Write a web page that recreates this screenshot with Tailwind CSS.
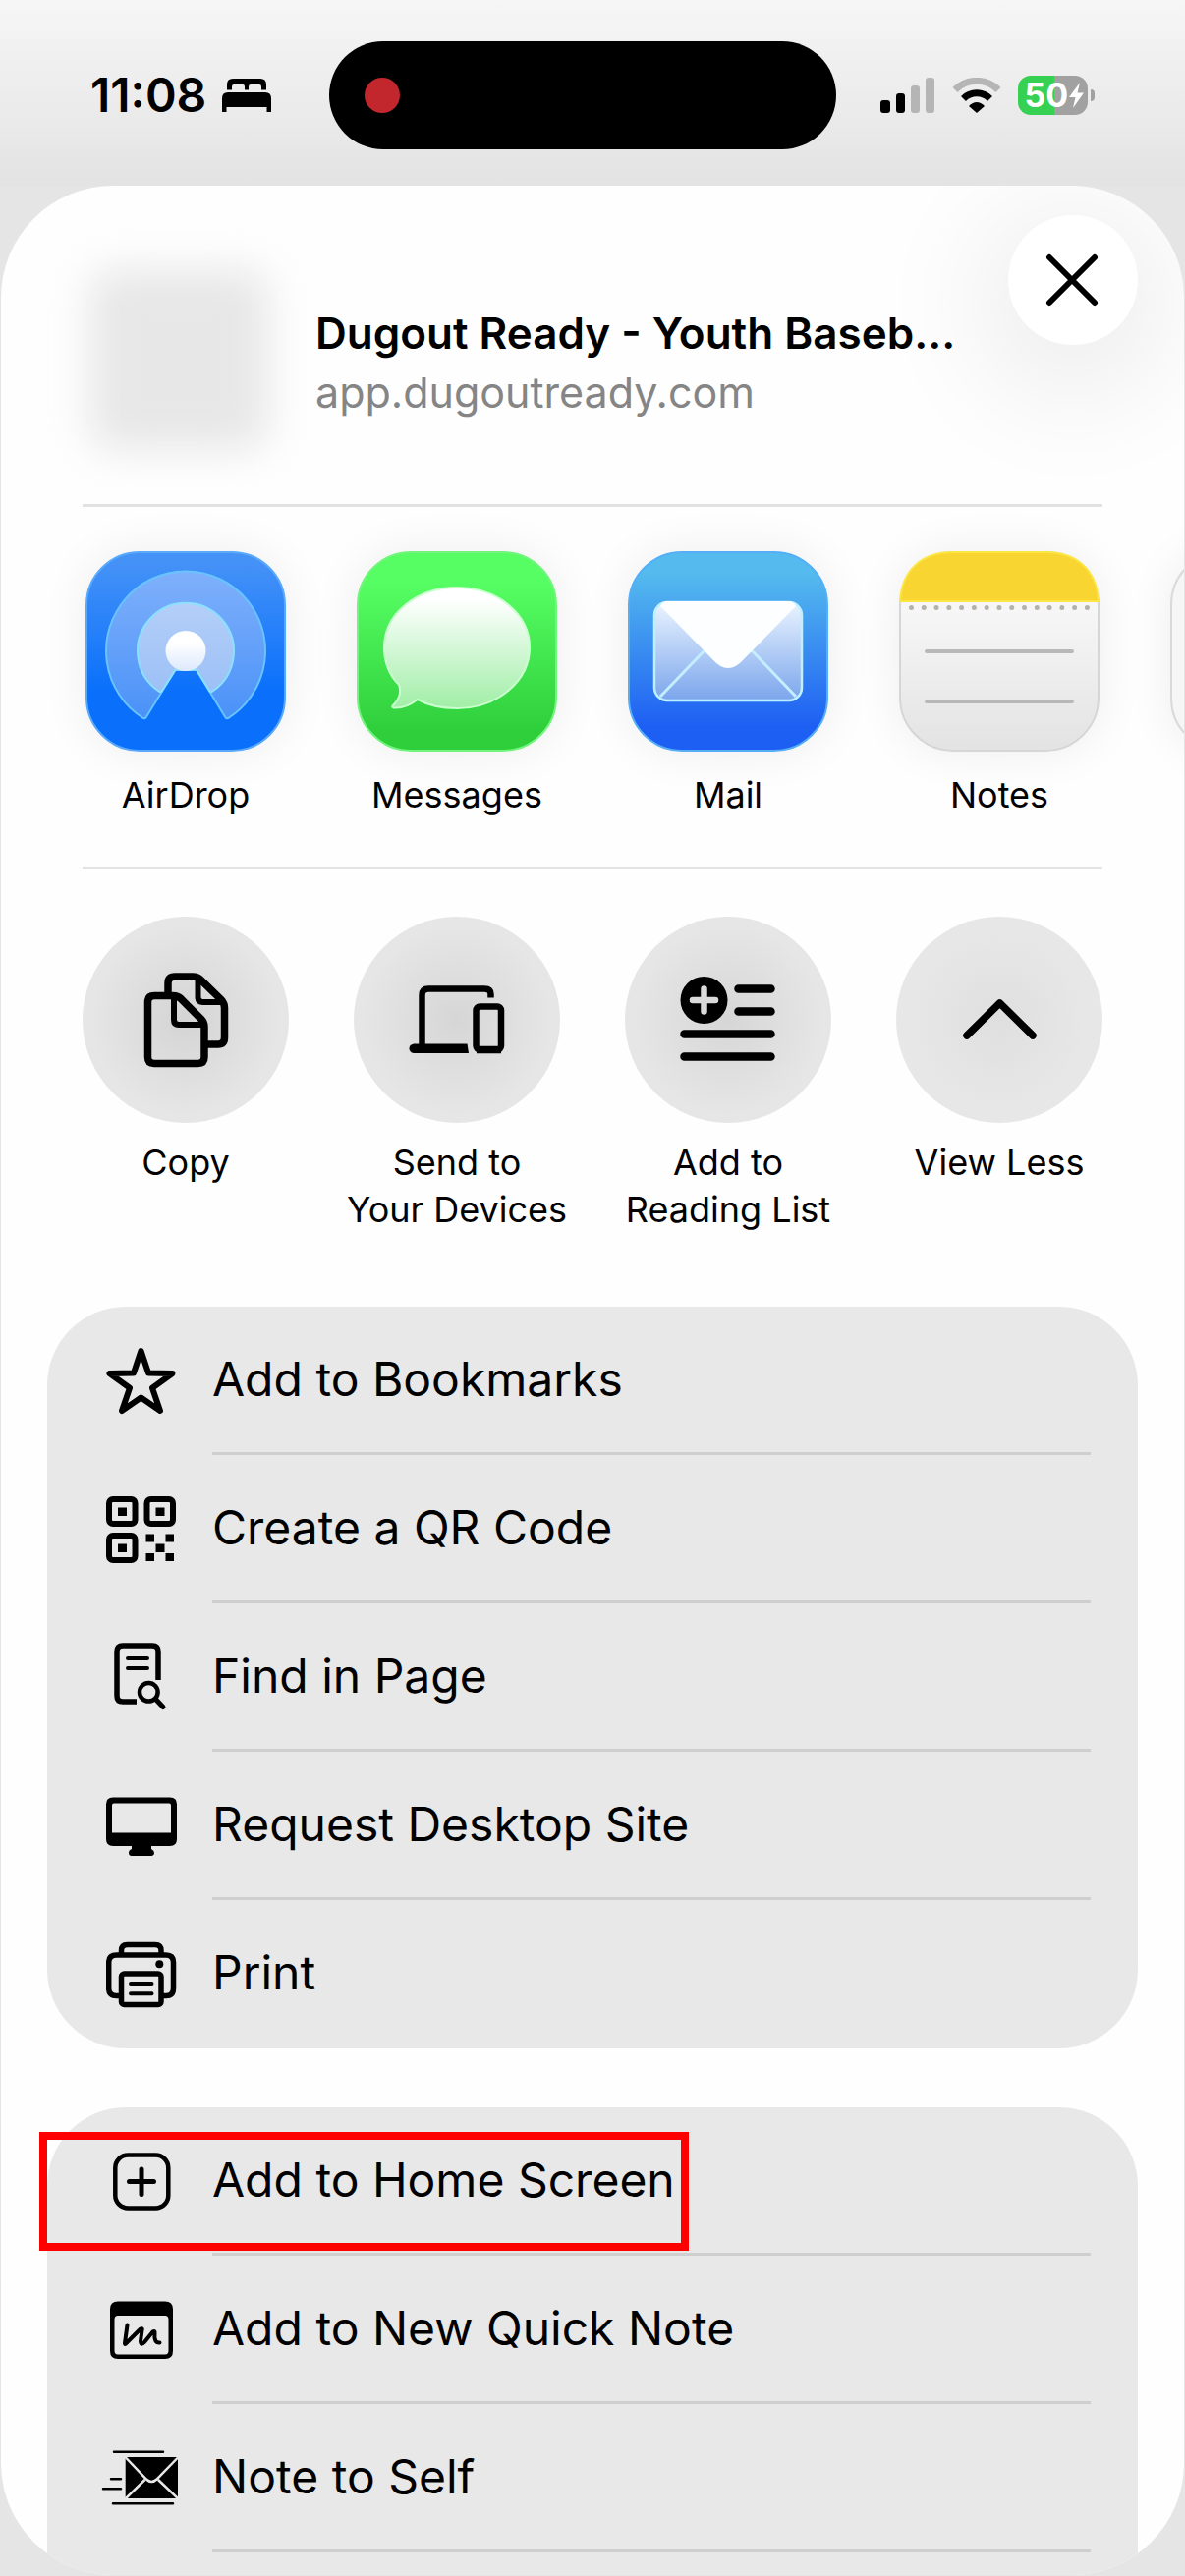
<!DOCTYPE html>
<html lang="en">
<head>
<meta charset="utf-8">
<meta name="viewport" content="width=device-width, initial-scale=1">
<title>Share</title>
<script src="https://cdn.jsdelivr.net/npm/@tailwindcss/browser@4"></script>
</head>
<body class="flex min-h-screen flex-col overflow-x-hidden bg-[#e5e5e5] pb-px font-['Inter','Liberation_Sans',sans-serif] text-black">

<!-- Status bar -->
<header class="flex h-[189px] items-start bg-linear-to-b from-[#f6f6f6] to-[#e3e3e3] pt-[42px]">
  <div class="flex h-[110px] w-[27.8%] shrink-0 items-center gap-4 pl-[92px]">
    <time class="text-[48px] leading-none font-semibold">11:08</time>
    <svg class="h-[34px] w-[50px] shrink-0" viewBox="0 0 50 34" role="img" aria-label="Sleep focus">
      <path d="M5 11.500V6Q5 0 11 0H39Q45 0 45 6V11.500H40V8Q40 6 38 6H29Q27 6 27 8V11.500H23V8Q23 6 21 6H12Q10 6 10 8V11.500Z"/>
      <path d="M0 34V20Q0 14 6 14H44Q50 14 50 20V34H45.500V29H4.500V34Z"/>
    </svg>
  </div>
  <div class="flex h-[110px] w-[42.8%] shrink-0 items-center rounded-full bg-black pl-9"><span class="size-9 rounded-full bg-[#c1272d]"></span></div>
  <div class="flex h-[110px] min-w-0 flex-1 items-center gap-[17px] pl-[45px]">
    <svg class="h-[36px] w-[56px] shrink-0" viewBox="0 0 56 36" role="img" aria-label="Signal">
      <rect x="0" y="23" width="10" height="13" rx="3"/><rect x="16" y="16" width="9" height="20" rx="3"/>
      <g fill="#b5b5b5"><rect x="31" y="8" width="9" height="28" rx="3"/><rect x="46" y="0" width="9" height="36" rx="3"/></g>
    </svg>
    <svg class="h-[36px] w-[50px] shrink-0" viewBox="0 0 50 36" role="img" aria-label="Wi-Fi">
      <path d="M3 12.500A31 31 0 0 1 47 12.500" fill="none" stroke="#b5b5b5" stroke-width="7"/>
      <path d="M11.500 21.500A19 19 0 0 1 38.500 21.500" fill="none" stroke="#000" stroke-width="7"/>
      <path d="M17 29Q25 21 33 29L25 36Z"/>
    </svg>
    <div class="relative flex h-10 w-[71px] items-center gap-px rounded-[13px] bg-linear-to-r from-[#36d152] from-52% to-[#a1a1a1] to-52% pl-[6px] text-white">
      <span class="text-[34px] leading-none font-bold">50</span>
      <svg class="absolute right-[3px] h-7 w-[17px]" viewBox="0 0 17 28" aria-hidden="true"><path d="M12 1L1 16H7.500L5 27L16 11.500H9.500Z" fill="#fff"/></svg>
      <span class="absolute top-[14px] -right-[7px] h-3 w-1 rounded-r-full bg-[#a1a1a1]"></span>
    </div>
  </div>
</header>

<main class="relative mx-px flex flex-1 flex-col overflow-hidden rounded-[114px] bg-[#fefefe] px-[47px]">

  <!-- Page being shared -->
  <section class="mx-9 flex h-[327px] border-b-3 border-[#e2e2e2]">
    <div class="mt-[85px] ml-[7px] h-[184px] w-[182px] shrink-0 rounded-3xl bg-[#e7e7e7] blur-[20px]"></div>
    <div class="mt-[120px] ml-12 min-w-0 whitespace-nowrap">
      <h1 class="text-[44px] leading-[60px] font-semibold">Dugout Ready - Youth Baseb...</h1>
      <p class="text-[43px] leading-[60px] text-[#858585]">app.dugoutready.com</p>
    </div>
  </section>
  <button type="button" aria-label="Close" class="absolute top-[30px] right-[47px] flex size-[132px] items-center justify-center rounded-full bg-white shadow-[0_24px_120px_30px_rgba(0,0,0,0.07)]">
    <svg class="size-14" viewBox="0 0 56 56" aria-hidden="true"><path d="M4 5L50 51M50 5L4 51" fill="none" stroke="#000" stroke-width="6" stroke-linecap="round"/></svg>
  </button>

  <!-- Apps -->
  <section aria-label="Apps" class="-mx-[47px] overflow-hidden pl-[83px]">
    <ul class="mr-[83px] flex h-[366px] gap-[66px] pt-[45px] text-center text-[36px] leading-[44px]">
      <li class="w-[210px] shrink-0"><button type="button" class="flex w-full flex-col items-center gap-[22px]">
        <svg class="size-[204px] overflow-visible rounded-[54px] shadow-[0_0_48px_rgba(0,0,0,0.07)]" viewBox="0 0 204 204" aria-hidden="true">
          <defs>
            <linearGradient id="ad" x1="0" y1="0" x2="0" y2="1"><stop offset=".05" stop-color="#4592f7"/><stop offset=".7" stop-color="#0a70fb"/></linearGradient>
            <linearGradient id="ad2" x1="0" y1="0" x2="0" y2="1"><stop offset="0" stop-color="#7fb0fb"/><stop offset="1" stop-color="#4a92f8"/></linearGradient>
            <linearGradient id="ad3" x1="0" y1="0" x2="0" y2="1"><stop offset="0" stop-color="#b4cff8"/><stop offset="1" stop-color="#9cc0f6"/></linearGradient>
            <linearGradient id="ad4" x1="0" y1="0" x2="0" y2="1"><stop offset=".3" stop-color="#fff"/><stop offset="1" stop-color="#dce9fd"/></linearGradient>
          </defs>
          <rect x="1" y="1" width="202" height="202" rx="54" fill="url(#ad)" stroke="#5aa9fb" stroke-width="2"/>
          <path d="M91.500 120.700L61.500 169.500Q60 171 58 169.500A81 81 0 1 1 146 169.500Q144 171 142.500 169.500L113 120.700Z" fill="url(#ad2)" stroke="#69c3ff" stroke-width="2"/>
          <path d="M91.500 120.700L77.500 142.500Q76 144 74 142A49 49 0 1 1 130 142Q128 144 126.500 142.500L113 120.700Z" fill="url(#ad3)" stroke="#8be0ff" stroke-width="2"/>
          <circle cx="102" cy="101.500" r="20.500" fill="url(#ad4)"/>
        </svg>AirDrop</button></li>
      <li class="w-[210px] shrink-0"><button type="button" class="flex w-full flex-col items-center gap-[22px]">
        <svg class="size-[204px] overflow-visible rounded-[54px] shadow-[0_0_48px_rgba(0,0,0,0.07)]" viewBox="0 0 204 204" aria-hidden="true">
          <defs>
            <linearGradient id="ms" x1="0" y1="0" x2="0" y2="1"><stop offset=".15" stop-color="#56fe63"/><stop offset=".9" stop-color="#2fcf3b"/></linearGradient>
            <linearGradient id="ms2" x1="0" y1="0" x2="0" y2="1"><stop offset=".1" stop-color="#fff"/><stop offset="1" stop-color="#a0eea6"/></linearGradient>
          </defs>
          <rect x="1" y="1" width="202" height="202" rx="54" fill="url(#ms)" stroke="#74f47f" stroke-width="2"/>
          <path d="M102 37C143.500 37 176 64 176 98S143.500 160 102 160C87 160 73 157 62 151C54 157 45 160 38 159.500Q35 159 37 157Q47 147 43 136C33 126 28 113 28 98C28 64 60.500 37 102 37Z" fill="url(#ms2)" stroke="#c9ffce" stroke-width="2"/>
        </svg>Messages</button></li>
      <li class="w-[210px] shrink-0"><button type="button" class="flex w-full flex-col items-center gap-[22px]">
        <svg class="size-[204px] overflow-visible rounded-[54px] shadow-[0_0_48px_rgba(0,0,0,0.07)]" viewBox="0 0 204 204" aria-hidden="true">
          <defs>
            <linearGradient id="ml" x1="0" y1="0" x2="0" y2="1"><stop offset=".1" stop-color="#55bbee"/><stop offset=".88" stop-color="#1e5ff3"/></linearGradient>
            <linearGradient id="ml2" x1="0" y1="0" x2="0" y2="1"><stop offset="0" stop-color="#eaf4ff"/><stop offset="1" stop-color="#7ba5ec"/></linearGradient>
          </defs>
          <rect x="1" y="1" width="202" height="202" rx="54" fill="url(#ml)" stroke="#55aef6" stroke-width="2"/>
          <rect x="27" y="52" width="150" height="100" rx="13" fill="url(#ml2)" stroke="#bff0ff" stroke-width="2.500"/>
          <path d="M33 148L78 101M171 148L126 101" fill="none" stroke="#c4eeff" stroke-width="3"/>
          <path d="M33 56Q35 51 40 51H164Q169 51 171 56L118 110Q102 128 86 110Z" fill="#fdfeff"/>
        </svg>Mail</button></li>
      <li class="w-[210px] shrink-0"><button type="button" class="flex w-full flex-col items-center gap-[22px]">
        <svg class="size-[204px] overflow-visible rounded-[54px] shadow-[0_0_48px_rgba(0,0,0,0.07)]" viewBox="0 0 204 204" aria-hidden="true">
          <defs>
            <linearGradient id="nt" x1="0" y1="0" x2="0" y2="1"><stop offset=".3" stop-color="#f6f6f6"/><stop offset="1" stop-color="#e3e3e3"/></linearGradient>
          </defs>
          <rect x="1" y="1" width="202" height="202" rx="54" fill="url(#nt)" stroke="#d6d6d6" stroke-width="2"/>
          <path d="M1 51C3 18 24 1 55 1H149C180 1 201 18 203 51Z" fill="#f8d531" stroke="#fbe643" stroke-width="2"/>
          <path d="M12.500 57.500H192" fill="none" stroke="#b4b2aa" stroke-width="5" stroke-linecap="round" stroke-dasharray="0 12.780"/>
          <path d="M28 102H176M28 153H176" fill="none" stroke="#b8b8b8" stroke-width="4" stroke-linecap="round"/>
        </svg>Notes</button></li>
      <li class="w-[210px] shrink-0 pl-[3px]"><div class="size-[204px] rounded-[54px] border-2 border-[#dadada] bg-[#f6f6f6] shadow-[0_0_48px_rgba(0,0,0,0.07)]"></div></li>
    </ul>
  </section>

  <!-- Quick actions -->
  <section aria-label="Actions" class="mx-9 border-t-3 border-[#e2e2e2] pt-[48px]">
    <ul class="flex h-[397px] justify-between text-center text-[36px] leading-[48px]">
      <li class="w-[210px]"><button type="button" class="flex w-full flex-col items-center gap-4">
        <svg class="size-[210px] rounded-full bg-radial from-[#d4d4d4] to-[#e6e6e6] to-65%" viewBox="0 0 210 210" fill="none" stroke="#000" stroke-width="7.500" stroke-linejoin="round" aria-hidden="true">
          <path d="M73 80.500H92Q97 80.500 100 83.500L120.500 104Q124 107.500 124 112V143Q124 149.500 117.500 149.500H73Q66.500 149.500 66.500 143V87Q66.500 80.500 73 80.500Z"/>
          <path d="M93 82V105Q93 110 98 110H122" stroke-width="6"/>
          <path d="M87 77V68Q87 61 94 61H112Q117 61 120 64L141 84.500Q144.500 88 144.500 93V123Q144.500 130 138 130H127"/>
          <path d="M117.500 63V82Q117.500 87 122.500 87H142" stroke-width="6"/>
        </svg>Copy</button></li>
      <li class="flex w-[210px] justify-center"><button type="button" class="flex shrink-0 flex-col items-center gap-4 whitespace-nowrap">
        <svg class="size-[210px] rounded-full bg-radial from-[#d6d6d6] to-[#e6e6e6] to-65%" viewBox="0 0 210 210" fill="none" stroke="#000" stroke-width="6.500" aria-hidden="true">
          <path d="M69.500 131V80Q69.500 73.500 76 73.500H133Q139.500 73.500 139.500 79V82.500"/>
          <path d="M61 129.500H115.500L117 139H61Q56.500 138 56.500 134.200T61 129.500Z" fill="#000" stroke="none"/>
          <rect x="124.500" y="91.500" width="25.500" height="44" rx="4"/>
          <path d="M125 135.500H150" stroke-width="7.500"/>
        </svg><span>Send to<br>Your Devices</span></button></li>
      <li class="flex w-[210px] justify-center"><button type="button" class="flex shrink-0 flex-col items-center gap-4 whitespace-nowrap">
        <svg class="size-[210px] rounded-full bg-radial from-[#d6d6d6] to-[#e6e6e6] to-65%" viewBox="0 0 210 210" fill="none" stroke="#000" stroke-width="8.500" stroke-linecap="round" aria-hidden="true">
          <circle cx="80.500" cy="85" r="24" fill="#000" stroke="none"/>
          <path d="M80.500 73.500V96.500M69 85H92" stroke="#dadada" stroke-width="6.500"/>
          <path d="M115.500 73.500H148.500M115.500 96.500H148.500M60.500 119.500H148.500M60.500 142.500H148.500"/>
        </svg><span>Add to<br>Reading List</span></button></li>
      <li class="w-[210px]"><button type="button" class="flex w-full flex-col items-center gap-4">
        <svg class="size-[210px] rounded-full bg-radial from-[#dfdfdf] to-[#e7e7e7] to-60%" viewBox="0 0 210 210" fill="none" stroke="#000" stroke-width="7.500" stroke-linecap="round" stroke-linejoin="round" aria-hidden="true"><path d="M72 121L105.500 88L139 121"/></svg>View Less</button></li>
    </ul>
  </section>

  <ul class="rounded-[80px] bg-[#e8e8e8] text-[48px] leading-[60px]">
    <li><button type="button" class="flex h-[151px] w-full items-center gap-9 pr-12 pl-[60px] text-left">
      <svg class="h-[71px] w-[72px] shrink-0" viewBox="0 0 72 71" fill="none" stroke="#000" stroke-width="6" stroke-linejoin="round" aria-hidden="true"><path d="M35.500 5L43 27.500L67.500 28L47 42.700L55 66L35.500 52.500L16 66L24 42.700L3.500 28L28 27.500Z"/></svg>
      <span class="flex h-[151px] flex-1 items-center border-b-3 border-[#cfcfcf]">Add to Bookmarks</span></button></li>
    <li><button type="button" class="flex h-[151px] w-full items-center gap-9 pr-12 pl-[60px] text-left">
      <svg class="h-[71px] w-[72px] shrink-0" viewBox="0 0 72 71" aria-hidden="true">
        <g fill="none" stroke="#000" stroke-width="6"><rect x="3" y="5" width="26.500" height="25" rx="4"/><rect x="41.500" y="5" width="26.500" height="25" rx="4"/><rect x="3" y="42" width="26.500" height="25" rx="4"/></g>
        <path d="M12 13.500h9v8.500h-9zM50.500 13.500h9v8.500h-9zM12 50.500h9v8.500h-9zM50.500 50.500h9v8.500h-9zM40.500 40.500h8.500v8h-8.500zM60.500 40.500h8.500v8h-8.500zM40.500 60h8.500v8h-8.500zM60.500 60h8.500v8h-8.500z"/>
      </svg>
      <span class="flex h-[151px] flex-1 items-center border-b-3 border-[#cfcfcf]">Create a QR Code</span></button></li>
    <li><button type="button" class="flex h-[151px] w-full items-center gap-9 pr-12 pl-[60px] text-left">
      <svg class="h-[71px] w-[72px] shrink-0" viewBox="0 0 72 71" fill="none" stroke="#000" stroke-width="5.500" aria-hidden="true">
        <path d="M53 38V9Q53 3 47 3H17Q11 3 11 9V54Q11 60 17 60H31"/>
        <path d="M22 16H42M22 26H42" stroke-width="4" stroke-linecap="round"/>
        <circle cx="43.300" cy="50.300" r="9.300" stroke-width="4.500"/><path d="M50.500 57.500L58 65.500" stroke-width="5" stroke-linecap="round"/>
      </svg>
      <span class="flex h-[151px] flex-1 items-center border-b-3 border-[#cfcfcf]">Find in Page</span></button></li>
    <li><button type="button" class="flex h-[151px] w-full items-center gap-9 pr-12 pl-[60px] text-left">
      <svg class="h-[71px] w-[72px] shrink-0" viewBox="0 0 72 71" aria-hidden="true">
        <path fill-rule="evenodd" d="M7 6.500H65Q72 6.500 72 13.500V49Q72 56 65 56H46V59Q49 60.500 49 63T46 66H26Q23 66 23 63T26 59V56H7Q0 56 0 49V13.500Q0 6.500 7 6.500ZM8 12.500Q6 12.500 6 14.500V42.500H66V14.500Q66 12.500 64 12.500Z"/>
      </svg>
      <span class="flex h-[151px] flex-1 items-center border-b-3 border-[#cfcfcf]">Request Desktop Site</span></button></li>
    <li><button type="button" class="flex h-[151px] w-full items-center gap-9 pr-12 pl-[60px] text-left">
      <svg class="h-[71px] w-[72px] shrink-0" viewBox="0 0 72 71" fill="none" stroke="#000" stroke-width="5.500" aria-hidden="true">
        <path d="M15.500 15V11.500Q15.500 5.500 21.500 5.500H50Q56 5.500 56 11.500V15"/>
        <path d="M14 57.500H10.500Q2.700 57.500 2.700 50V23.500Q2.700 16 10.500 16H61Q68.500 16 68.500 23.500V50Q68.500 57.500 61 57.500H57"/>
        <rect x="15.500" y="35" width="40.500" height="31.500" rx="3"/>
        <path d="M25 45H46.500M25 55.300H46.500" stroke-width="4" stroke-linecap="round"/>
        <circle cx="54.300" cy="25.300" r="4" fill="#000" stroke="none"/>
      </svg>
      <span class="flex h-[151px] flex-1 items-center border-b-3 border-transparent">Print</span></button></li>
  </ul>

  <ul class="mt-[60px] flex-1 rounded-t-[80px] bg-[#e8e8e8] text-[48px] leading-[60px]">
    <li class="relative"><button type="button" class="flex h-[151px] w-full items-center gap-9 pr-12 pl-[60px] text-left">
      <svg class="h-[71px] w-[72px] shrink-0" viewBox="0 0 72 71" fill="none" stroke="#000" stroke-width="4.500" aria-hidden="true"><rect x="9.300" y="8.500" width="54" height="54" rx="13"/><path d="M36 23V48.500M23.500 35.500H48.500" stroke-width="5" stroke-linecap="round"/></svg>
      <span class="flex h-[151px] flex-1 items-center border-b-3 border-[#cfcfcf]">Add to Home Screen</span></button>
      <span class="pointer-events-none absolute top-[25px] -left-2 h-[121px] w-[661px] border-8 border-[#fe0000]"></span></li>
    <li><button type="button" class="flex h-[151px] w-full items-center gap-9 pr-12 pl-[60px] text-left">
      <svg class="h-[71px] w-[72px] shrink-0" viewBox="0 0 72 71" aria-hidden="true">
        <path fill-rule="evenodd" d="M12 6.500H60Q68 6.500 68 14.500V57Q68 65 60 65H12Q4 65 4 57V14.500Q4 6.500 12 6.500ZM12 21Q8.500 21 8.500 25V56.500Q8.500 60.500 12 60.500H60Q63.500 60.500 63.500 56.500V25Q63.500 21 60 21Z"/>
        <path d="M21.500 30.500L19 49Q19 51 21 48.500L34.500 35Q37.500 33 36.500 36L35 47Q35.500 52 39 48L47.500 37.500Q50 36 49.500 39Q48.500 49 54.500 48.500" fill="none" stroke="#000" stroke-width="4" stroke-linecap="round" stroke-linejoin="round"/>
      </svg>
      <span class="flex h-[151px] flex-1 items-center border-b-3 border-[#cfcfcf]">Add to New Quick Note</span></button></li>
    <li><button type="button" class="flex h-[151px] w-full items-center gap-9 pr-12 pl-[60px] text-left">
      <svg class="h-[71px] w-[72px] shrink-0 overflow-visible" viewBox="0 0 72 71" fill="none" aria-hidden="true">
        <path d="M8 8.700H58M5 36.300H15M-3 46.300H15M7 61.300H68" stroke="#000" stroke-width="2.500" stroke-linecap="round"/>
        <rect x="19.700" y="14" width="53.300" height="42" fill="#000"/>
        <path d="M19 13.500L41 36.500Q46.300 41.500 51.500 36.500L74 13.500M39.500 37L19 57M53 37L74 57" stroke="#e8e8e8" stroke-width="2.500"/>
      </svg>
      <span class="flex h-[151px] flex-1 items-center border-b-3 border-[#cfcfcf]">Note to Self</span></button></li>
  </ul>
</main>
</body>
</html>
